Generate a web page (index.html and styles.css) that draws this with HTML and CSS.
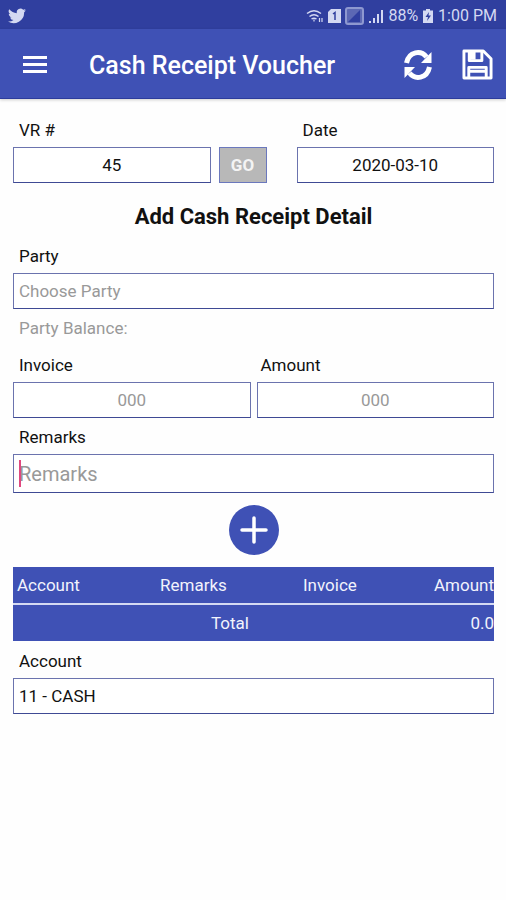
FILE: index.html
```html
<!DOCTYPE html>
<html lang="en">
<head>
<meta charset="utf-8">
<meta name="viewport" content="width=device-width, initial-scale=1">
<title>Cash Receipt Voucher</title>
<link rel="stylesheet" href="styles.css">
</head>
<body>
<div class="status">
  <svg class="bird" width="18" height="16" viewBox="0 0 24 20" fill="currentColor" aria-hidden="true"><path d="M24 2.400a10 10 0 0 1-2.800.8A5 5 0 0 0 23.300.5a10 10 0 0 1-3.100 1.200A4.900 4.900 0 0 0 11.800 6.200 14 14 0 0 1 1.700 1a4.900 4.900 0 0 0 1.500 6.600A5 5 0 0 1 1 7c0 2.400 1.700 4.400 3.900 4.900a5 5 0 0 1-2.200.1 4.900 4.900 0 0 0 4.600 3.400A10 10 0 0 1 0 17.400 14 14 0 0 0 21.500 5a10 10 0 0 0 2.500-2.600z"/></svg>
  <div class="status-right">
    <svg width="18" height="16" viewBox="0 0 18 16" fill="none" stroke="currentColor" stroke-width="1.500" aria-hidden="true"><path d="M1 5.500Q8 0 15 5.500M3.500 8.500Q8 5 12.500 8.500M5.500 11Q8 9.300 10.500 11"/><path d="M8 11.500v2M13.500 10v4M16 10v4" stroke-width="1.200"/></svg>
    <svg width="13" height="16" viewBox="0 0 13 16" aria-hidden="true"><path d="M3 1h10v14H0V4z" fill="currentColor"/><path d="M5 6l2-1.500V12" fill="none" stroke="#303f9f" stroke-width="1.500"/></svg>
    <svg class="sim" width="19" height="18" viewBox="0 0 19 18" aria-hidden="true"><rect x="1" y="1" width="17" height="16" rx="2" fill="#5c68b4" stroke="#8e98d0" stroke-width="2"/><path d="M3 15L15 3v12z" fill="#303f9f"/></svg>
    <svg width="16" height="16" viewBox="0 0 16 16" fill="currentColor" aria-hidden="true"><path d="M1 13h2v2H1zM5 10h2v5H5zM9 6h2v9H9zM13 2h2v13h-2z"/></svg>
    <span class="pct">88%</span>
    <svg width="12" height="16" viewBox="0 0 10 16" aria-hidden="true"><path d="M3 1h4v1.500h3V15H0V2.500h3z" fill="currentColor"/><path d="M6 4L2.500 9H5l-1 4L8 7.500H5.500z" fill="#303f9f"/></svg>
    <span class="time">1:00 PM</span>
  </div>
</div>
<header class="bar">
  <button class="icon menu" type="button" aria-label="Menu"><svg width="24" height="18" viewBox="0 0 24 18" fill="currentColor"><path d="M0 0h24v3H0zM0 7h24v3H0zM0 14h24v3H0z"/></svg></button>
  <h1>Cash Receipt Voucher</h1>
  <button class="icon" type="button" aria-label="Refresh"><svg width="30" height="32" viewBox="0 0 30 32"><g fill="none" stroke="currentColor" stroke-width="5"><path d="M3.500 14C6 2 18 1 23.500 8"/><path d="M26.500 18C24 30 12 31 6.500 24"/></g><path d="M28.500 3v11H18zM1.500 29V18H12z" fill="currentColor"/></svg></button>
  <button class="icon save" type="button" aria-label="Save"><svg width="31" height="31" viewBox="0 0 32 32" fill="none" stroke="currentColor" stroke-width="3" stroke-linejoin="round"><path d="M2 2h20l8 8v20H2z"/><path d="M7.500 2v10h13V2M7 30V19h18v11M7 23h18"/><path d="M8 3h6v8H8z" fill="currentColor" stroke="none"/></svg></button>
</header>
<main>
  <div class="row top">
    <div class="field grow"><label for="vr">VR #</label><input id="vr" class="center" value="45"></div>
    <button class="go" type="button">GO</button>
    <div class="field grow"><label for="date">Date</label><input id="date" class="center" value="2020-03-10"></div>
  </div>
  <h2>Add Cash Receipt Detail</h2>
  <div class="field"><label for="party">Party</label><input id="party" placeholder="Choose Party"></div>
  <p class="balance">Party Balance:</p>
  <div class="row pair">
    <div class="field grow"><label for="invoice">Invoice</label><input id="invoice" class="center" placeholder="000"></div>
    <div class="field grow"><label for="amount">Amount</label><input id="amount" class="center" placeholder="000"></div>
  </div>
  <div class="field active"><label for="remarks">Remarks</label><input id="remarks" placeholder="Remarks"></div>
  <button class="add" type="button" aria-label="Add"><svg width="28" height="28" viewBox="0 0 28 28" fill="none" stroke="currentColor" stroke-width="3.500" stroke-linecap="round"><path d="M14 2v24M2 14h24"/></svg></button>
  <table>
    <thead><tr><th class="c1">Account</th><th class="c2">Remarks</th><th>Invoice</th><th class="num">Amount</th></tr></thead>
    <tbody><tr><td colspan="2" class="total">Total</td><td colspan="2" class="num">0.0</td></tr></tbody>
  </table>
  <div class="field"><label for="account">Account</label><input id="account" value="11 - CASH"></div>
</main>
</body>
</html>
```
FILE: styles.css
```css
* { box-sizing: border-box; }
body { margin: 0; background: #fefefe; color: #111; font: 17px/24px Roboto, "Liberation Sans", sans-serif; }
button, input { font: inherit; color: inherit; }
button { padding: 0; border: 0; cursor: pointer; }
h1, h2, p { margin: 0; }
svg { display: block; flex: none; }

.status { display: flex; align-items: center; justify-content: space-between; height: 29px; padding: 3px 9px 0 8px; background: #303f9f; color: #d4d9f2; }
.status-right { display: flex; align-items: center; gap: 4px; font-size: 16px; }

.bar { display: flex; align-items: center; height: 70px; padding: 2px 13px 0 23px; background: #3f51b5; color: #fff; border-bottom: 1px solid #2c3c9c; box-shadow: 0 1px 3px #0003; }
.bar h1 { flex: 1; padding-top: 3px; margin-left: 42px; font-size: 25px; line-height: 32px; font-weight: 500; white-space: nowrap; }
.icon { background: none; }
.save { margin-left: 29px; }

main { padding: 12px 12px 12px 13px; }
.row { display: flex; align-items: flex-end; }
.top { gap: 8px; }
.top .field:last-child { margin-left: 22px; }
.pair { gap: 6px; }
.grow { flex: 1; min-width: 0; }
.field label { display: block; height: 36px; padding: 7px 6px 0; }
.field:has(#amount) label { padding-left: 4px; }
input { display: block; width: 100%; height: 36px; padding: 0 5px; border: 1px solid #6b73ae; border-bottom-color: #3f4a94; border-radius: 0; background: #fff; outline: 0; }
input::placeholder { color: #999; opacity: 1; }
.center { text-align: center; }
.go { width: 48px; height: 36px; border: 1px solid #6b78bd; background: #b8b8b8; color: #f4f4f4; font-weight: 700; }
h2 { height: 54px; padding-top: 20px; font-size: 22px; line-height: 28px; font-weight: 700; text-align: center; }
.balance { height: 37px; padding: 7px 6px 0; color: #999; }
.active { position: relative; }
.active input { height: 39px; font-size: 20px; }
.active::after { content: ""; position: absolute; left: 6px; bottom: 6px; width: 2px; height: 27px; background: #e0487f; }
.add { display: grid; place-items: center; width: 50px; height: 50px; margin: 12px auto; border-radius: 50%; background: #3f51b5; color: #fff; }

table { width: 100%; border-collapse: collapse; table-layout: fixed; background: #3f51b5; color: #f2f3fc; }
th, td { height: 37px; padding: 0; font-weight: 400; text-align: left; }
th { border-bottom: 2px solid #d5daf3; }
.c1 { width: 147px; padding-left: 4px; }
.c2 { width: 143px; }
.total { padding-right: 54px; text-align: right; }
.num { text-align: right; }
table + .field label { height: 37px; padding-top: 8px; }
```
